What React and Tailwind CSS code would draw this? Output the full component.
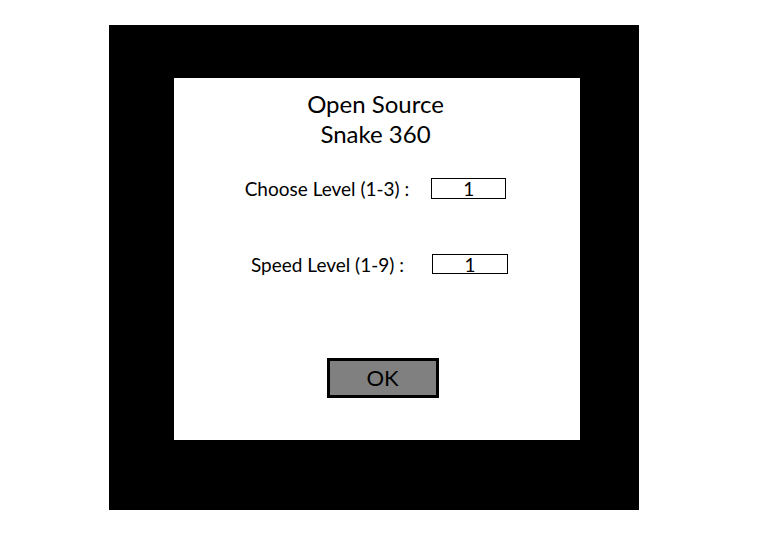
export default function App() {
  return (
    <div className="w-[784px] h-[541px] bg-white font-['Lato',sans-serif] text-black">
      <div className="pt-[25px] pl-[109px]">
        <div className="w-[530px] h-[485px] bg-black pt-[53px] pl-[65px]">
          <div className="w-[406px] h-[362px] bg-white flex flex-col items-center">
            {/* Title */}
            <div className="mt-[11px] text-[24px] leading-[30px] text-center ml-[-3px]">
              <div>Open Source</div>
              <div>Snake 360</div>
            </div>

            {/* Level */}
            <div className="mt-[29px] h-[21px] flex items-center gap-[22px] ml-[-3px]">
              <span className="text-[19px] leading-none">Choose Level (1-3) :</span>
              <div className="w-[75px] h-[21px] border border-black flex items-center justify-center text-[19px] leading-none">
                1
              </div>
            </div>

            {/* Speed */}
            <div className="mt-[55px] h-[20px] flex items-center gap-[28px] ml-[5px]">
              <span className="text-[19px] leading-none">Speed Level (1-9) :</span>
              <div className="w-[76px] h-[20px] border border-black flex items-center justify-center text-[19px] leading-none">
                1
              </div>
            </div>

            {/* OK */}
            <button className="mt-[84px] ml-[11px] w-[112px] h-[40px] border-[3px] border-black bg-[#808080] text-[22px] leading-none flex items-center justify-center">
              OK
            </button>
          </div>
        </div>
      </div>
    </div>
  );
}
